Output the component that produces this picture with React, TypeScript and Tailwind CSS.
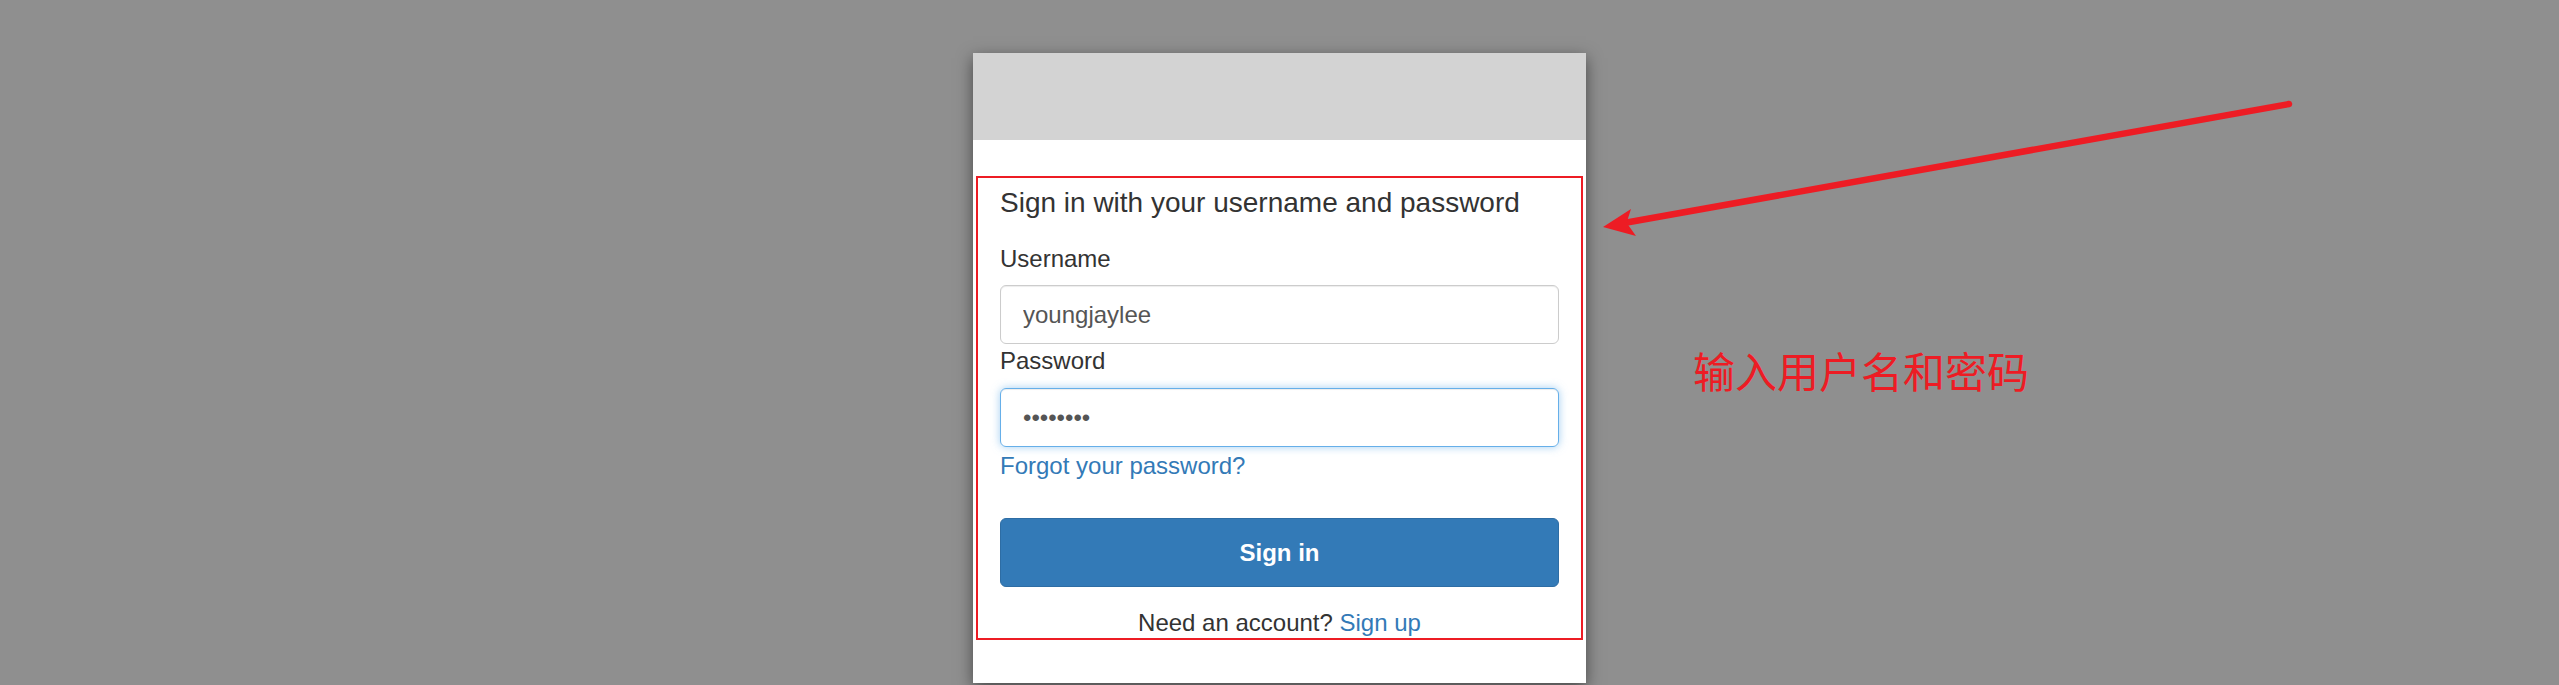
export default function App() {
  return (
    <div className="relative h-[685px] w-full overflow-hidden bg-[#8f8f8f] font-['Liberation_Sans',Arial,sans-serif]">
      <div className="mx-auto mt-[53px] w-[613px] bg-white shadow-[0_5px_15px_rgba(0,0,0,0.5)]">
        <div className="h-[87px] bg-[#d3d3d3]" />
        <div className="px-[3px] pt-[36px] pb-[43px]">
          <div className="flex flex-col border-2 border-[#ed1c24] px-[22px] pt-[9px]">
            <h4 className="h-[32px] text-[28px] leading-[32px] text-[#333]">
              Sign in with your username and password
            </h4>
            <label className="mt-[25px] h-[30px] text-[24px] leading-[30px] text-[#333]">Username</label>
            <input
              readOnly
              value="youngjaylee"
              className="mt-[11px] h-[59px] w-full rounded-[6px] border border-[#ccc] px-[22px] text-[24px] text-[#555] shadow-[inset_0_1px_1px_rgba(0,0,0,0.075)] outline-none"
            />
            <label className="mt-[2px] h-[30px] text-[24px] leading-[30px] text-[#333]">Password</label>
            <input
              readOnly
              value="••••••••"
              className="mt-[12px] h-[59px] w-full rounded-[6px] border border-[#66afe9] px-[22px] text-[24px] text-[#555] shadow-[inset_0_1px_1px_rgba(0,0,0,0.075),0_0_8px_rgba(102,175,233,0.6)] outline-none"
            />
            <a href="#" className="mt-[4px] h-[30px] self-start text-[24px] leading-[30px] text-[#337ab7]">
              Forgot your password?
            </a>
            <button className="mt-[37px] h-[69px] w-full rounded-[6px] border border-[#2e6da4] bg-[#337ab7] text-[24px] font-bold text-white">
              Sign in
            </button>
            <p className="mt-[21px] h-[30px] text-center text-[24px] leading-[30px] text-[#333]">
              Need an account? <a href="#" className="text-[#337ab7]">Sign up</a>
            </p>
          </div>
        </div>
      </div>

      <svg className="pointer-events-none absolute left-0 top-0" width="2559" height="685" viewBox="0 0 2559 685">
        <line x1="1624" y1="223" x2="2289" y2="104" stroke="#ed1c24" strokeWidth="6.5" strokeLinecap="round" />
        <polygon points="1603,227 1631,209 1626.6,222.8 1636,236" fill="#ed1c24" />
      </svg>

      <div className="absolute left-[1693px] top-[349px] text-[42px] leading-[42px] text-[#ed1c24] font-['Noto_Sans_CJK_SC',sans-serif]">
        输入用户名和密码
      </div>
    </div>
  );
}
